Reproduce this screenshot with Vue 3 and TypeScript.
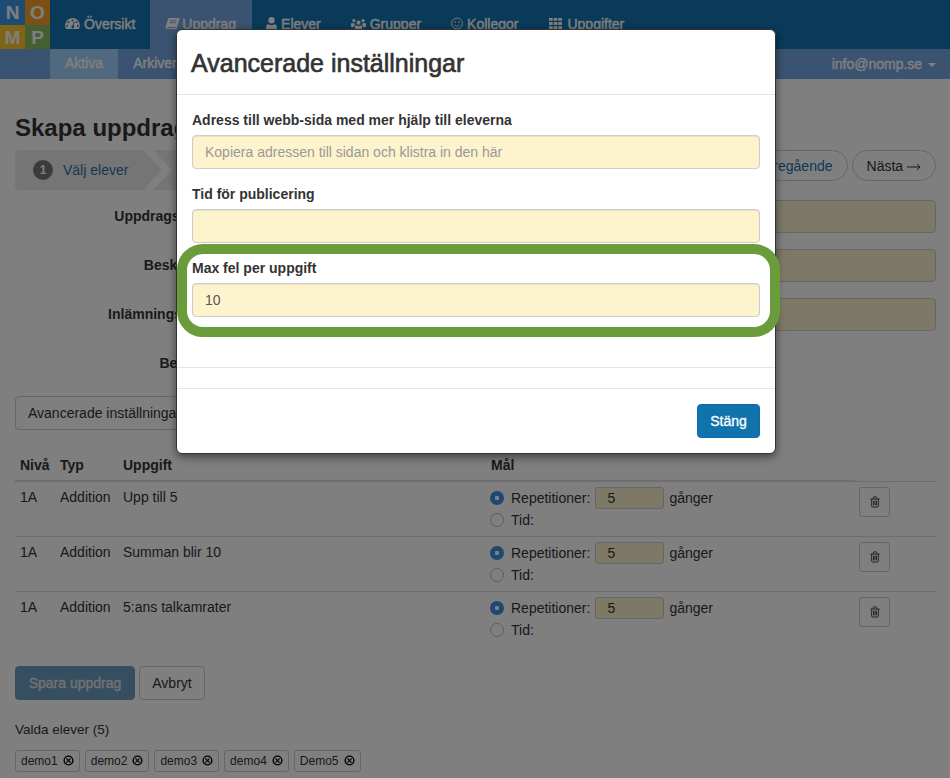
<template>
  <div class="page">
    <header class="navbar">
      <div class="logo">
        <span class="l-n">N</span><span class="l-o">O</span><span class="l-m">M</span><span class="l-p">P</span>
      </div>
      <nav class="main-nav">
        <a class="nav-item">
          <svg class="ico w15" viewBox="0 0 16 14"><path fill-rule="evenodd" d="M8 1a8 8 0 0 0-8 8c0 1.600.5 3 1.200 4h13.600c.7-1 1.200-2.400 1.200-4a8 8 0 0 0-8-8zM8 2.600a1 1 0 1 1 0 2 1 1 0 0 1 0-2zM3.500 4.400a1 1 0 1 1 0 2 1 1 0 0 1 0-2zM12.500 4.400a1 1 0 1 1 0 2 1 1 0 0 1 0-2zM2.200 8.400a1 1 0 1 1 0 2 1 1 0 0 1 0-2zM13.800 8.400a1 1 0 1 1 0 2 1 1 0 0 1 0-2zM9.500 4.800l.9.300-1.300 4.300a1.400 1.400 0 1 1-1-.2z"/></svg>
          Översikt
        </a>
        <a class="nav-item active">
          <svg class="ico w15 tight" viewBox="0 0 16 14"><path fill-rule="evenodd" d="M4.500 1H15l.6.8-2.800 9.400c-.3 1-1 1.800-2.300 1.800H2.300C1 13 .2 11.800.6 10.500L3.300 2c.2-.6.600-1 1.200-1zM5.600 3.500l-.3 1h7l.3-1zM4.900 5.700l-.3 1h7l.3-1zM2.300 11.800h8.600l.4-.9H2.600c-.6 0-.6.900-.3.900z"/></svg>
          Uppdrag
        </a>
        <a class="nav-item">
          <svg class="ico w11" viewBox="2 0 12 14"><path d="M8 0a3.500 3.500 0 1 1 0 7 3.500 3.500 0 0 1 0-7zM3.200 14c-.8 0-1.200-.5-1.200-1.300 0-2.700.7-5 2.700-5 .9.800 2 1.300 3.300 1.300s2.400-.5 3.300-1.300c2 0 2.700 2.300 2.700 5 0 .8-.4 1.300-1.200 1.300z"/></svg>
          Elever
        </a>
        <a class="nav-item">
          <svg class="ico w15" viewBox="0 0 18 14"><path d="M9 3.500a2.500 2.500 0 1 1 0 5 2.500 2.500 0 0 1 0-5zM3.500 1.500a2 2 0 1 1 0 4 2 2 0 0 1 0-4zM14.500 1.500a2 2 0 1 1 0 4 2 2 0 0 1 0-4zM5.500 14c-.7 0-1-.4-1-1 0-2 .5-4 1.900-4 .7.600 1.600 1 2.600 1s1.900-.4 2.600-1c1.400 0 1.900 2 1.900 4 0 .6-.3 1-1 1zM0 8c0-1 .5-2 1.300-2 .6.500 1.400.8 2.200.8h.8c-.1.800.3 1.600.9 2.100-1 .4-1.700 1.400-1.800 2.600H1c-.6 0-1-.4-1-1zM18 8c0-1-.5-2-1.300-2-.6.500-1.400.8-2.200.8h-.8c.1.800-.3 1.600-.9 2.100 1 .4 1.700 1.400 1.800 2.600H17c.6 0 1-.4 1-1z"/></svg>
          Grupper
        </a>
        <a class="nav-item">
          <svg class="ico w12" viewBox="0 0 14 14"><circle cx="7" cy="7" r="6.300" fill="none" stroke="currentColor" stroke-width="1.100"/><circle cx="4.900" cy="5.300" r=".9"/><circle cx="9.100" cy="5.300" r=".9"/><path d="M3.900 8.600c1.500 2 4.700 2 6.200 0" fill="none" stroke="currentColor" stroke-width="1"/></svg>
          Kollegor
        </a>
        <a class="nav-item">
          <svg class="ico w15" viewBox="0 0 14 14"><path d="M0 1h4v3H0zM5 1h4v3H5zM10 1h4v3h-4zM0 5.500h4v3H0zM5 5.500h4v3H5zM10 5.500h4v3h-4zM0 10h4v3H0zM5 10h4v3H5zM10 10h4v3h-4z"/></svg>
          Uppgifter
        </a>
      </nav>
    </header>

    <div class="subnav">
      <a class="sub-item active">Aktiva</a>
      <a class="sub-item">Arkiverade</a>
      <span class="user">info@nomp.se <i class="caret"></i></span>
    </div>

    <main class="content">
      <h1 class="page-title">Skapa uppdrag</h1>

      <div class="wizard">
        <div class="steps">
          <div class="step-sep">
            <div class="step"><span class="step-num">1</span>Välj elever</div>
          </div>
        </div>
        <div class="wizard-btns">
          <a class="pill link">Föregående</a>
          <a class="pill">Nästa
            <svg viewBox="0 0 14 8" width="14" height="8"><path d="M0 4h13M10 1l3 3-3 3" fill="none" stroke="currentColor" stroke-width="1"/></svg>
          </a>
        </div>
      </div>

      <form class="task-form" @submit.prevent>
        <div v-for="f in fields" :key="f.label" class="form-row">
          <label>{{ f.label }}</label>
          <div v-if="!f.short" class="fake-input"></div>
        </div>
      </form>

      <button class="btn adv" type="button">Avancerade inställningar</button>

      <table class="tasks">
        <thead>
          <tr>
            <th class="c-level">Nivå</th>
            <th class="c-type">Typ</th>
            <th class="c-task">Uppgift</th>
            <th class="c-goal">Mål</th>
            <th class="c-del"></th>
          </tr>
        </thead>
        <tbody>
          <tr v-for="t in tasks" :key="t">
            <td>1A</td>
            <td>Addition</td>
            <td>{{ t }}</td>
            <td class="goal">
              <div class="goal-line">
                <span class="radio on"></span>Repetitioner:<span class="rep">5</span>gånger
              </div>
              <div class="goal-line">
                <span class="radio"></span>Tid:
              </div>
            </td>
            <td class="del">
              <button class="trash" type="button">
                <svg viewBox="0 0 12 14" width="10" height="12"><path fill="none" stroke="currentColor" stroke-width="1.100" d="M2 3.500v8.300c0 .7.400 1.200 1 1.200h6c.6 0 1-.5 1-1.200V3.500M.5 3.500h11M4 3.300V1.500c0-.4.200-.7.600-.7h2.800c.4 0 .6.300.6.700v1.800M4.300 5.500v5.500M6 5.500v5.500M7.700 5.500v5.500"/></svg>
              </button>
            </td>
          </tr>
        </tbody>
      </table>

      <div class="actions">
        <button class="btn primary-dim" type="button">Spara uppdrag</button>
        <button class="btn cancel" type="button">Avbryt</button>
      </div>

      <p class="chosen">Valda elever (5)</p>
      <div class="chips">
        <span v-for="s in students" :key="s" class="chip">
          {{ s }}
          <svg viewBox="0 0 12 12" width="11" height="11"><path fill-rule="evenodd" d="M6 .5a5.500 5.500 0 1 1 0 11 5.500 5.500 0 0 1 0-11zM6 2a4 4 0 1 0 0 8 4 4 0 0 0 0-8zM4.200 3.300 6 5.100l1.800-1.800.9.900L6.900 6l1.800 1.800-.9.900L6 6.900 4.200 8.700l-.9-.9L5.100 6 3.300 4.200z"/></svg>
        </span>
      </div>
    </main>

    <div class="overlay"></div>

    <section class="modal">
      <div class="modal-head">
        <h2>Avancerade inställningar</h2>
      </div>
      <div class="modal-body">
        <div class="group">
          <label>Adress till webb-sida med mer hjälp till eleverna</label>
          <input type="text" placeholder="Kopiera adressen till sidan och klistra in den här" />
        </div>
        <div class="group">
          <label>Tid för publicering</label>
          <input type="text" />
        </div>
        <div class="group">
          <label>Max fel per uppgift</label>
          <input type="text" v-model="maxErrors" />
        </div>
      </div>
      <div class="modal-spacer"></div>
      <div class="modal-foot">
        <button class="close" type="button">Stäng</button>
      </div>
      <div class="ring"></div>
    </section>
  </div>
</template>

<script setup lang="ts">
import { ref } from 'vue'

const maxErrors = ref('10')

const fields = [
  { label: 'Uppdragsrubrik:', short: false },
  { label: 'Beskrivning', short: false },
  { label: 'Inlämningsdatum', short: false },
  { label: 'Belöning:', short: true },
]

const tasks = ['Upp till 5', 'Summan blir 10', '5:ans talkamrater']
const students = ['demo1', 'demo2', 'demo3', 'demo4', 'Demo5']
</script>

<style>
html,
body {
  margin: 0;
  background: #fff;
}
</style>

<style scoped>
* {
  box-sizing: border-box;
}

.page {
  position: relative;
  width: 950px;
  height: 778px;
  overflow: hidden;
  background: #fff;
  color: #333;
  font-family: "Liberation Sans", Arial, sans-serif;
  font-size: 14px;
  line-height: 20px;
}

.navbar {
  display: flex;
  height: 49px;
  background: #1274b2;
}

.logo {
  display: grid;
  grid-template-columns: 25px 25px;
  grid-template-rows: 25px 24px;
  width: 50px;
  font-size: 19px;
  font-weight: bold;
  line-height: 25px;
  text-align: center;
  color: #fff;
}

.l-n { background: #3c96e6; }
.l-o { background: #f5a028; }
.l-m { background: #ffc828; }
.l-p { background: #8cbe64; }

.main-nav {
  display: flex;
}

.nav-item {
  display: flex;
  align-items: center;
  gap: 4px;
  height: 49px;
  padding: 0 15px 2px;
  color: #fff;
  -webkit-text-stroke: 0.4px currentColor;
}

.nav-item.active {
  margin-right: -1px;
  padding-right: 16px;
  background: #74a6e0;
}

.ico {
  height: 13px;
  fill: currentColor;
  stroke: none;
}

.w11 { width: 11px; }
.w12 { width: 12px; }
.w15 { width: 15px; }
.tight { margin-right: -2px; }

.subnav {
  display: flex;
  align-items: center;
  height: 30px;
  padding-left: 50px;
  background: #74a6e0;
  color: #fff;
  -webkit-text-stroke: 0.4px currentColor;
}

.sub-item {
  height: 30px;
  padding: 4px 15px;
}

.sub-item.active {
  background: #a0d2ff;
}

.user {
  margin-left: auto;
  padding-right: 14px;
}

.caret {
  display: inline-block;
  margin-left: 2px;
  border-top: 4px solid #fff;
  border-left: 4px solid transparent;
  border-right: 4px solid transparent;
  vertical-align: middle;
}

.content {
  padding: 0 14px 0 15px;
}

.page-title {
  margin: 34px 0 7px;
  font-size: 24px;
  line-height: 30px;
  font-weight: bold;
  color: #333;
}

.wizard {
  display: flex;
  gap: 4px;
  align-items: flex-start;
  height: 50px;
}

.steps {
  flex: 1;
  height: 40px;
  overflow: hidden;
  border-radius: 4px;
  background: #ebebeb;
}

.step-sep {
  width: 157px;
  height: 40px;
  background: #fff;
  clip-path: polygon(0 0, 138px 0, 157px 50%, 138px 100%, 0 100%);
}

.step {
  display: flex;
  align-items: center;
  width: 147px;
  height: 40px;
  padding-left: 18px;
  background: #ebebeb;
  color: #2a6fa8;
  clip-path: polygon(0 0, 128px 0, 147px 50%, 128px 100%, 0 100%);
}

.step-num {
  flex: none;
  width: 20px;
  height: 20px;
  margin-right: 10px;
  border-radius: 50%;
  background: #777;
  color: #fff;
  font-size: 12px;
  font-weight: bold;
  line-height: 20px;
  text-align: center;
}

.wizard-btns {
  display: flex;
  gap: 4px;
}

.pill {
  display: block;
  height: 31px;
  padding: 5px 14px;
  border: 1px solid #ccc;
  border-radius: 16px;
  background: #fff;
  color: #333;
}

.pill.link {
  color: #1274b2;
}

.task-form {
  display: flex;
  flex-direction: column;
  gap: 16px;
  height: 196px;
}

.form-row {
  display: flex;
  height: 33px;
  line-height: 33px;
}

.form-row label {
  width: 219px;
  padding-right: 10px;
  font-weight: bold;
  text-align: right;
}

.fake-input {
  flex: 1;
  border: 1px solid #ccc;
  border-radius: 4px;
  background: #fdf3cd;
}

.btn {
  height: 34px;
  padding: 0 12px;
  border: 1px solid #ccc;
  border-radius: 4px;
  background: #fff;
  color: #333;
  font: inherit;
}

.adv {
  display: block;
  width: 190px;
  text-align: left;
}

.tasks {
  width: 921px;
  margin-top: 23px;
  border-collapse: collapse;
  table-layout: fixed;
}

.tasks th {
  height: 28px;
  padding: 0 5px 4px;
  border-bottom: 2px solid #ddd;
  font-weight: bold;
  text-align: left;
}

.tasks th.c-del {
  border-bottom: 1px solid #ddd;
}

.c-level { width: 40px; }
.c-type { width: 63px; }
.c-task { width: 368px; }
.c-goal { width: 369px; }

.tasks td {
  height: 55px;
  padding: 5px;
  border-bottom: 1px solid #ddd;
  vertical-align: top;
}

.tasks tbody tr:last-child td {
  border-bottom: 0;
}

.tasks td.goal {
  padding-left: 4px;
}

.goal-line {
  display: flex;
  align-items: center;
  height: 22px;
}

.radio {
  width: 14px;
  height: 14px;
  margin-right: 7px;
  border: 1px solid #bbb;
  border-radius: 50%;
  background: #fff;
}

.radio.on {
  border: 0;
  background: radial-gradient(circle, #fff 0 2px, #3f8ee0 2.5px);
}

.rep {
  width: 69px;
  height: 22px;
  margin: 0 5px;
  padding-left: 11px;
  border: 1px solid #ccc;
  border-radius: 3px;
  background: #fdf3cd;
  line-height: 20px;
}

.tasks td.del {
  padding: 5px 0 0 4px;
}

.trash {
  display: flex;
  align-items: center;
  justify-content: center;
  width: 31px;
  height: 30px;
  padding: 0;
  border: 1px solid #ccc;
  border-radius: 3px;
  background: #fff;
  color: #333;
}

.actions {
  display: flex;
  gap: 4px;
  margin-top: 19px;
}

.primary-dim {
  width: 120px;
  padding: 0;
  border-color: #6d9fc0;
  background: #6d9fc0;
  color: #e6e6e6;
  -webkit-text-stroke: 0.3px currentColor;
}

.cancel {
  width: 66px;
  padding: 0;
}

.chosen {
  margin: 20px 0 10px;
  font-size: 13.500px;
}

.chips {
  display: flex;
  gap: 5px;
}

.chip {
  display: flex;
  align-items: center;
  gap: 5px;
  height: 22px;
  padding: 0 5px;
  border: 1px solid #ccc;
  border-radius: 3px;
  font-size: 12px;
}

.overlay {
  position: absolute;
  inset: 0;
  background: rgba(0, 0, 0, 0.5);
}

.modal {
  position: absolute;
  left: 176px;
  top: 29px;
  width: 600px;
  height: 425px;
  border: 1px solid #333;
  border-radius: 6px;
  background: #fff;
  box-shadow: 0 3px 9px rgba(0, 0, 0, 0.5);
}

.modal-head {
  height: 65px;
  padding: 18px 14px 0;
  border-bottom: 1px solid #e5e5e5;
}

.modal-head h2 {
  margin: 0;
  font-size: 25px;
  line-height: 30px;
  font-weight: normal;
  color: #333;
  -webkit-text-stroke: 0.65px currentColor;
}

.modal-body {
  display: flex;
  flex-direction: column;
  gap: 15px;
  height: 273px;
  padding: 15px 15px 0;
  border-bottom: 1px solid #e5e5e5;
}

.group label {
  display: block;
  margin-bottom: 5px;
  font-weight: bold;
}

.group input {
  display: block;
  width: 568px;
  height: 34px;
  padding: 0 12px;
  border: 1px solid #ccc;
  border-radius: 4px;
  background: #fdf3cd;
  box-shadow: inset 0 1px 1px rgba(0, 0, 0, 0.075);
  color: #555;
  font: inherit;
}

.group input::placeholder {
  color: #999;
  opacity: 1;
}

.modal-spacer {
  height: 21px;
  border-bottom: 1px solid #e5e5e5;
}

.modal-foot {
  display: flex;
  justify-content: flex-end;
  padding: 15px 15px 0;
}

.close {
  width: 63px;
  height: 34px;
  padding: 0;
  border: 1px solid #0f6ca6;
  border-radius: 4px;
  background: #1073ae;
  color: #fff;
  font: inherit;
  -webkit-text-stroke: 0.3px currentColor;
}

.ring {
  position: absolute;
  left: 0;
  top: 214px;
  width: 603px;
  height: 93px;
  border: 10px solid #6a9c3c;
  border-radius: 26px;
  pointer-events: none;
}
</style>
